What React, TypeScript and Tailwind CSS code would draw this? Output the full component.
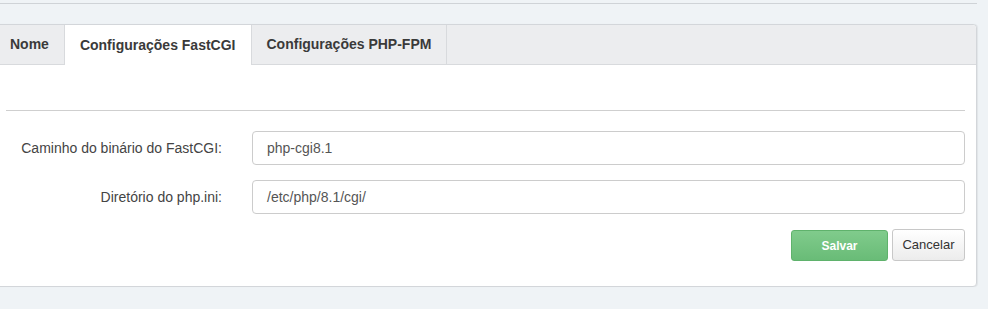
export default function App() {
  return (
    <div className="h-[309px] w-[988px] overflow-hidden bg-[#eff3f6] font-['Liberation_Sans',Arial,sans-serif] text-[14px]">
      <div className="h-[3px]" />
      <div className="h-px w-[977px] bg-[#cfd3d7]" />
      <div className="h-[20px]" />

      <div className="-ml-[6px] w-[983px] rounded-[4px] border border-[#d3d6da] bg-white shadow-[1px_0_1px_rgba(0,0,0,0.06)]">
        <div className="flex h-[40px] rounded-t-[4px] border-b border-[#d8dadd] bg-[#ecedef]">
          <div className="-mb-px flex h-[40px] items-center border-r border-b border-[#d8dadd] px-[15px] font-bold text-[#3a3a3a]">
            Nome
          </div>
          <div className="-mb-px flex h-[40px] items-center border-r border-[#d8dadd] bg-white px-[15px] font-bold text-[#3a3a3a]">
            Configurações FastCGI
          </div>
          <div className="-mb-px flex h-[40px] items-center border-r border-b border-[#d8dadd] px-[15px] font-bold text-[#3a3a3a]">
            Configurações PHP-FPM
          </div>
        </div>

        <div className="px-[11px] pt-[45px] pb-[25px]">
          <div className="h-px bg-[#cfcfcf]" />

          <div className="mt-[20px] flex items-center">
            <label className="w-[216px] text-right text-[#444]">Caminho do binário do FastCGI:</label>
            <div className="ml-[30px] flex h-[34px] flex-1 items-center rounded-[4px] border border-[#cccccc] pl-[14px] text-[#555]">
              php-cgi8.1
            </div>
          </div>

          <div className="mt-[15px] flex items-center">
            <label className="w-[216px] text-right text-[#444]">Diretório do php.ini:</label>
            <div className="ml-[30px] flex h-[34px] flex-1 items-center rounded-[4px] border border-[#cccccc] pl-[14px] text-[#555]">
              /etc/php/8.1/cgi/
            </div>
          </div>

          <div className="mt-[15px] flex items-end justify-end gap-[4px]">
            <button className="h-[31px] w-[97px] rounded-[3px] border border-[#5fb26c] bg-gradient-to-b from-[#80cb8c] to-[#69bc77] text-[12px] font-bold text-white">
              Salvar
            </button>
            <button className="h-[32px] w-[73px] rounded-[3px] border border-[#c8c8c8] bg-gradient-to-b from-[#ffffff] to-[#ececec] text-[13px] text-[#333]">
              Cancelar
            </button>
          </div>
        </div>
      </div>
    </div>
  )
}
